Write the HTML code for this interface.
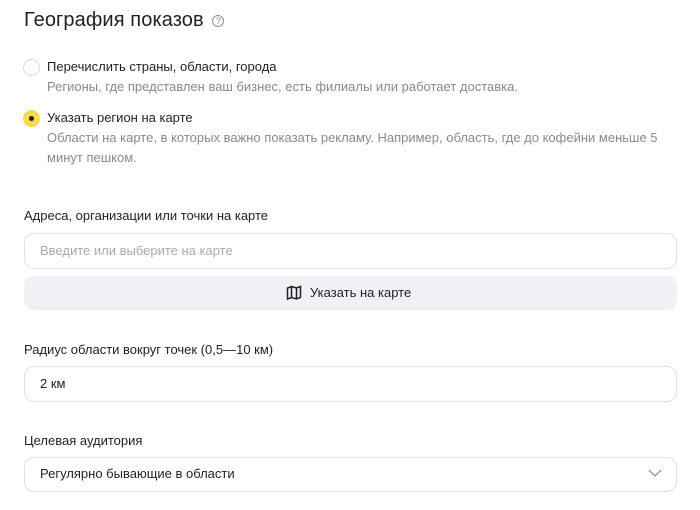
<!DOCTYPE html>
<html><head><meta charset="utf-8"><style>
*{margin:0;padding:0;box-sizing:border-box}
body{width:700px;height:510px;background:#fff;font-family:"Liberation Sans","DejaVu Sans",sans-serif;color:#1f2024;position:relative;overflow:hidden;font-size:13px;letter-spacing:0}
.a{position:absolute;white-space:nowrap}
.g{color:#858a94}
.radio{position:absolute;width:17px;height:17px;border-radius:50%;border:1px solid #dcdde3;background:#fff}
.sel{background:#fcd94a;border:none}
.sel:after{content:"";position:absolute;left:6px;top:6px;width:5px;height:5px;border-radius:50%;background:#222}
.box{position:absolute;left:24px;width:653px;height:36px;border:1px solid #dfe1e6;border-radius:10px}
</style></head><body>
<div class="a" style="left:24px;top:9px;font-size:20px;letter-spacing:0.1px">География показов <span style="display:inline-block;width:12px;height:12px;border:1.3px solid #8a8f9b;border-radius:50%;font-size:9px;color:#8a8f9b;text-align:center;line-height:10px;vertical-align:2px;margin-left:3px;letter-spacing:0">?</span></div>
<div class="radio" style="left:23px;top:59px"></div>
<div class="a" style="left:47px;top:59px">Перечислить страны, области, города</div>
<div class="a g" style="left:47px;top:79px">Регионы, где представлен ваш бизнес, есть филиалы или работает доставка.</div>
<div class="radio sel" style="left:23px;top:110px"></div>
<div class="a" style="left:47px;top:110px">Указать регион на карте</div>
<div class="a g" style="left:47px;top:130px">Области на карте, в которых важно показать рекламу. Например, область, где до кофейни меньше 5</div>
<div class="a g" style="left:47px;top:150px">минут пешком.</div>
<div class="a" style="left:24px;top:208px">Адреса, организации или точки на карте</div>
<div class="box" style="top:233px"></div>
<div class="a" style="left:40px;top:243px;color:#a6abb4">Введите или выберите на карте</div>
<div style="position:absolute;left:24px;top:276px;width:653px;height:34px;background:#eff1f5;border-radius:10px"></div>
<svg class="a" style="left:286px;top:285px" width="16" height="16" viewBox="0 0 16 16" fill="none" stroke="#222" stroke-width="1.5"><path d="M1.5 3v11l4-1.5 5 1.5 4-1.5V1.5l-4 1.5-5-1.5z M5.5 1.5v11 M10.5 3v11"/></svg>
<div class="a" style="left:310px;top:285px">Указать на карте</div>
<div class="a" style="left:24px;top:342px">Радиус области вокруг точек (0,5—10 км)</div>
<div class="box" style="top:366px"></div>
<div class="a" style="left:40px;top:376px">2 км</div>
<div class="a" style="left:24px;top:433px">Целевая аудитория</div>
<div class="box" style="top:457px;height:35px"></div>
<div class="a" style="left:40px;top:466px">Регулярно бывающие в области</div>
<svg class="a" style="left:648px;top:468px" width="14" height="10" viewBox="0 0 14 10" fill="none" stroke="#9a9ea8" stroke-width="1.5"><path d="M1 2l6 6 6-6"/></svg>
</body></html>
